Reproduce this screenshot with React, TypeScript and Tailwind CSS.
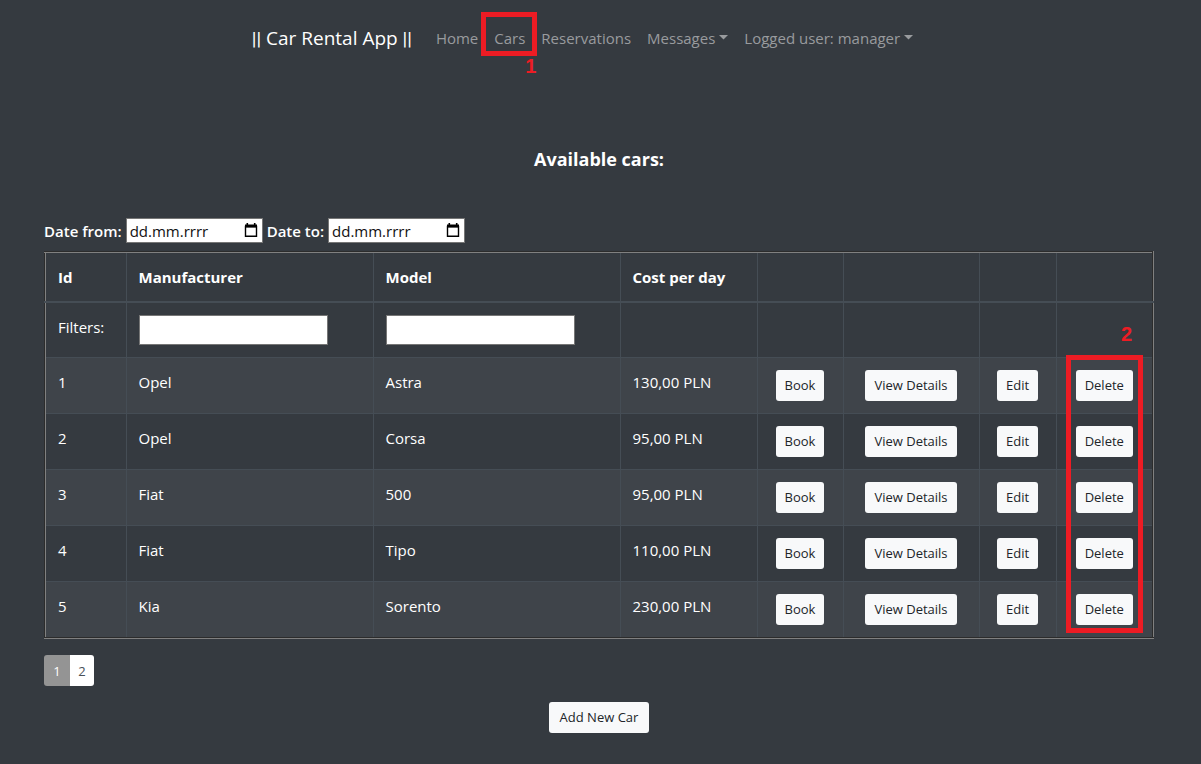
import React from 'react';

const cars = [
  { id: 1, manufacturer: 'Opel', model: 'Astra', cost: '130,00 PLN' },
  { id: 2, manufacturer: 'Opel', model: 'Corsa', cost: '95,00 PLN' },
  { id: 3, manufacturer: 'Fiat', model: '500', cost: '95,00 PLN' },
  { id: 4, manufacturer: 'Fiat', model: 'Tipo', cost: '110,00 PLN' },
  { id: 5, manufacturer: 'Kia', model: 'Sorento', cost: '230,00 PLN' },
];

const cell = 'border border-[#454d55] px-3 py-3 align-top text-left';
const button =
  'h-[31px] rounded-[3px] bg-[#f8f9fa] px-[9px] text-[13px] leading-[21px] text-[#212529] whitespace-nowrap';

function Caret() {
  return (
    <svg width="9" height="5" viewBox="0 0 9 5" className="mb-0.5 ml-1" aria-hidden="true">
      <path d="M0 0h9L4.5 4.5z" fill="currentColor" />
    </svg>
  );
}

function CalendarIcon() {
  return (
    <svg width="14" height="15" viewBox="0 0 14 15" fill="none" aria-hidden="true">
      <path d="M1.5 3.5h11v9.8h-11z" stroke="#000" strokeWidth="1.4" />
      <path d="M1 1.5h12v3H1zM2.5 0h1.6v2H2.5zM9.9 0h1.6v2H9.9z" fill="#000" />
    </svg>
  );
}

function DateField({ id, label }: { id: string; label: string }) {
  return (
    <div className="flex items-center gap-1">
      <label htmlFor={id} className="font-semibold">{label}</label>
      <div className="flex h-[25px] w-[137px] items-center border border-[#767676] bg-white pr-1 pl-[3px]">
        <input
          id={id}
          type="text"
          placeholder="dd.mm.rrrr"
          className="h-[23px] min-w-0 flex-1 bg-transparent text-[15px] text-black outline-none placeholder:text-[#111]"
        />
        <button type="button" aria-label="Open calendar">
          <CalendarIcon />
        </button>
      </div>
    </div>
  );
}

function Nav() {
  return (
    <nav className="flex h-[89px] items-start justify-center pt-[18px] pr-7">
      <a href="#" className="mr-4 text-[19px] leading-[40px] text-white">
        <span className="font-[Roboto,sans-serif]">||</span> Car Rental App <span className="font-[Roboto,sans-serif]">||</span>
      </a>
      <ul className="flex leading-[40px] text-[#999b9e]">
        <li><a href="#home" className="block px-2">Home</a></li>
        <li className="relative">
          <a href="#cars" className="block px-2">Cars</a>
          <span className="pointer-events-none absolute -top-[6px] -left-[5px] h-11 w-14 border-5 border-[#ed1c24]" />
          <span className="absolute top-9 left-[39px] font-['Liberation_Sans',Arial,sans-serif] text-[20px] leading-[24px] font-bold text-[#ed1c24]">1</span>
        </li>
        <li><a href="#reservations" className="block px-2">Reservations</a></li>
        <li><button type="button" className="flex items-center px-2">Messages<Caret /></button></li>
        <li><button type="button" className="flex items-center px-2">Logged user: manager<Caret /></button></li>
      </ul>
    </nav>
  );
}

function CarTable() {
  return (
    <div className="relative mt-2">
      <table className="w-full table-fixed border-collapse border-2 border-[#808080] [border-style:groove]">
        <colgroup>
          <col className="w-[81px]" />
          <col />
          <col />
          <col className="w-[137px]" />
          <col className="w-[86px]" />
          <col className="w-[136px]" />
          <col className="w-[77px]" />
          <col className="w-[97px]" />
        </colgroup>
        <thead>
          <tr className="h-[49px] font-bold">
            <th className={`${cell} border-b-2`}>Id</th>
            <th className={`${cell} border-b-2`}>Manufacturer</th>
            <th className={`${cell} border-b-2`}>Model</th>
            <th className={`${cell} border-b-2`}>Cost per day</th>
            <th className={`${cell} border-b-2`} />
            <th className={`${cell} border-b-2`} />
            <th className={`${cell} border-b-2`} />
            <th className={`${cell} border-b-2`} />
          </tr>
        </thead>
        <tbody>
          <tr>
            <td className={cell}>Filters:</td>
            <td className={cell}>
              <input type="text" aria-label="Filter by manufacturer" className="block h-[30px] w-[189px] border border-[#767676] bg-white px-1 text-black" />
            </td>
            <td className={cell}>
              <input type="text" aria-label="Filter by model" className="block h-[30px] w-[189px] border border-[#767676] bg-white px-1 text-black" />
            </td>
            <td className={cell} />
            <td className={cell} />
            <td className={cell} />
            <td className={cell} />
            <td className={cell} />
          </tr>
          {cars.map((car) => (
            <tr key={car.id} className="h-14 odd:bg-transparent even:bg-[#3f444a]">
              <td className={cell}>{car.id}</td>
              <td className={cell}>{car.manufacturer}</td>
              <td className={cell}>{car.model}</td>
              <td className={cell}>{car.cost}</td>
              {['Book', 'View Details', 'Edit', 'Delete'].map((action) => (
                <td key={action} className="border border-[#454d55] py-3">
                  <div className="flex justify-center">
                    <button type="button" className={button}>{action}</button>
                  </div>
                </td>
              ))}
            </tr>
          ))}
        </tbody>
      </table>
      <span className="absolute top-[71px] right-[22px] font-['Liberation_Sans',Arial,sans-serif] text-[20px] leading-[24px] font-bold text-[#ed1c24]">2</span>
      <span className="pointer-events-none absolute top-[104px] right-[11px] bottom-[6px] w-[77px] border-5 border-[#ed1c24]" />
    </div>
  );
}

export default function App() {
  return (
    <div className="min-h-screen bg-[#353a40] font-['Open_Sans','Noto_Sans',sans-serif] text-[15px] leading-6 text-white">
      <Nav />
      <main className="pr-[47px] pl-11">
        <h1 className="pt-[58px] pb-[47px] text-center text-[18px] leading-6 font-bold">Available cars:</h1>
        <div className="flex gap-1">
          <DateField id="date-from" label="Date from:" />
          <DateField id="date-to" label="Date to:" />
        </div>
        <CarTable />
        <div className="mt-4 flex text-[13px]">
          <button type="button" className="h-[31px] w-[26px] rounded-l-[3px] bg-[#949494] text-white">1</button>
          <button type="button" className="h-[31px] w-6 rounded-r-[3px] bg-white text-[#495057]">2</button>
        </div>
        <div className="mt-4 flex justify-center pb-8">
          <button type="button" className={`${button} min-w-[100px]`}>Add New Car</button>
        </div>
      </main>
    </div>
  );
}
